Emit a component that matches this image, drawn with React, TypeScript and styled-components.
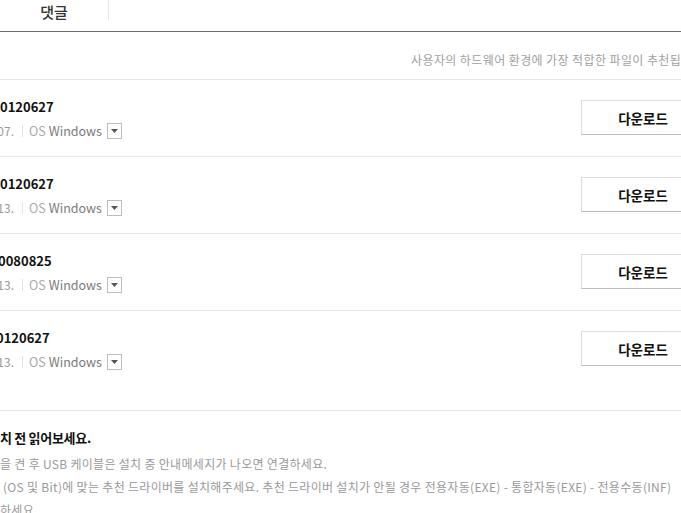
import React from 'react';
import styled, { createGlobalStyle } from 'styled-components';

const GlobalStyle = createGlobalStyle`
  html, body {
    margin: 0;
    padding: 0;
    background: #fff;
  }
  * {
    box-sizing: border-box;
  }
`;

const Page = styled.div`
  width: 681px;
  height: 513px;
  overflow: hidden;
  font-family: 'Noto Sans CJK KR', 'Noto Sans', sans-serif;
  color: #111;
  white-space: nowrap;
`;

const TabBar = styled.div`
  display: flex;
  height: 32px;
  border-bottom: 1px solid #6b6b6b;
`;

const Tab = styled.div`
  width: 109px;
  height: 20px;
  border-right: 1px solid #e6e6e6;
  text-align: center;
  font-size: 15px;
  font-weight: 500;
  line-height: 24px;
  color: #333;
`;

const Notice = styled.div`
  height: 48px;
  padding: 19px 0 0 411px;
  border-bottom: 1px solid #e8e8e8;
  font-size: 12px;
  line-height: 18px;
  letter-spacing: 0.4px;
  color: #a0a0a0;
`;

const List = styled.ul`
  margin: 0;
  padding: 0;
  list-style: none;
`;

const Row = styled.li`
  display: flex;
  justify-content: space-between;
  align-items: flex-start;
  height: 77px;
  border-bottom: 1px solid #e8e8e8;

  &:last-child {
    height: 100px;
  }
`;

const Info = styled.div`
  padding-top: 18px;
`;

const Title = styled.div<{ $shift?: number }>`
  margin-left: ${(p) => p.$shift ?? 0}px;
  font-size: 13px;
  font-weight: 700;
  line-height: 18px;
  color: #111;
`;

const Meta = styled.div`
  display: flex;
  align-items: center;
  margin-top: 6px;
  height: 18px;
  font-size: 12.5px;
  line-height: 18px;
`;

const Date = styled.span`
  display: flex;
  justify-content: flex-end;
  width: 14px;
  font-size: 12px;
  color: #999;
`;

const Divider = styled.span`
  flex: none;
  width: 1px;
  height: 12px;
  margin: 0 6px 0 8px;
  background: #e3e3e3;
`;

const OsLabel = styled.span`
  color: #aaa;
  margin-right: 3px;
`;

const OsName = styled.span`
  color: #7a7a7a;
`;

const SelectBox = styled.span`
  display: flex;
  align-items: center;
  justify-content: center;
  width: 15px;
  height: 16px;
  margin-left: 5px;
  border: 1px solid #bdbdbd;
  background: #fff;
`;

const DownloadButton = styled.button`
  flex: none;
  width: 124px;
  height: 35px;
  margin-top: 20px;
  margin-right: -24px;
  padding: 0;
  border: 1px solid #dcdcdc;
  border-bottom-color: #bcbcbc;
  background: #fff;
  font-family: inherit;
  font-size: 13.5px;
  font-weight: 700;
  color: #111;
  cursor: pointer;
`;

const Notes = styled.div`
  padding-top: 18px;
`;

const NotesTitle = styled.div`
  font-size: 13px;
  font-weight: 700;
  line-height: 18px;
  letter-spacing: -0.3px;
  color: #111;
`;

const NoteList = styled.ul`
  margin: 5px 0 0;
  padding: 0;
  list-style: none;
`;

const NoteItem = styled.li<{ $indent?: number }>`
  padding-left: ${(p) => p.$indent ?? 0}px;
  font-size: 12px;
  line-height: 23px;
  letter-spacing: 0.3px;
  color: #999;
`;

const Caret = () => (
  <svg width="7" height="4" viewBox="0 0 7 4">
    <path d="M0 0h7L3.5 4z" fill="#555" />
  </svg>
);

const drivers = [
  { version: '0120627', date: '07.', shift: 0 },
  { version: '0120627', date: '13.', shift: 0 },
  { version: '0080825', date: '13.', shift: -2 },
  { version: '0120627', date: '13.', shift: -4 },
];

export default function App() {
  return (
    <Page>
      <GlobalStyle />
      <TabBar>
        <Tab>댓글</Tab>
      </TabBar>
      <Notice>사용자의 하드웨어 환경에 가장 적합한 파일이 추천됩니다.</Notice>
      <List>
        {drivers.map((d, i) => (
          <Row key={i}>
            <Info>
              <Title $shift={d.shift}>{d.version}</Title>
              <Meta>
                <Date>{d.date}</Date>
                <Divider />
                <OsLabel>OS</OsLabel>
                <OsName>Windows</OsName>
                <SelectBox>
                  <Caret />
                </SelectBox>
              </Meta>
            </Info>
            <DownloadButton>다운로드</DownloadButton>
          </Row>
        ))}
      </List>
      <Notes>
        <NotesTitle>치 전 읽어보세요.</NotesTitle>
        <NoteList>
          <NoteItem>을 켠 후 USB 케이블은 설치 중 안내메세지가 나오면 연결하세요.</NoteItem>
          <NoteItem $indent={3}>
            (OS 및 Bit)에 맞는 추천 드라이버를 설치해주세요. 추천 드라이버 설치가 안될 경우 전용자동(EXE) - 통합자동(EXE) - 전용수동(INF)
          </NoteItem>
          <NoteItem>하세요.</NoteItem>
        </NoteList>
      </Notes>
    </Page>
  );
}
